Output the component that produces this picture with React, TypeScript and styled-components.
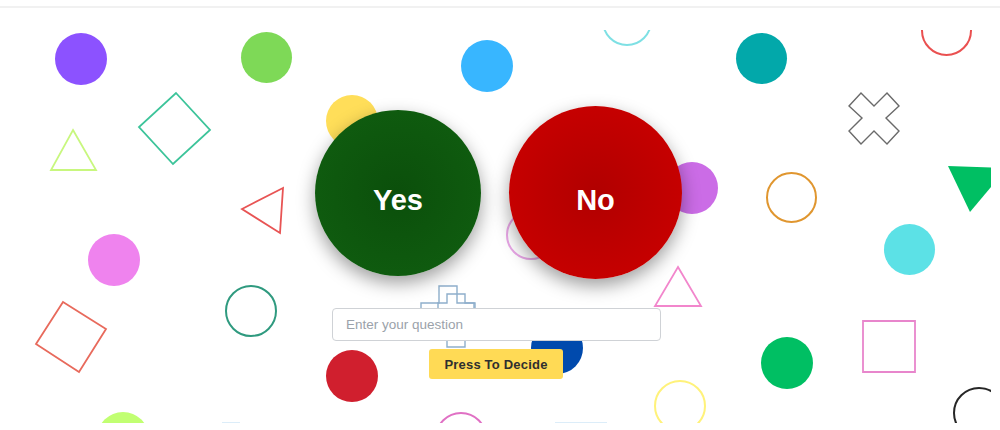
import styled, { createGlobalStyle } from "styled-components";

const GlobalStyle = createGlobalStyle`
    html, body {
        margin: 0;
        padding: 0;
        background: #ffffff;
        font-family: "Liberation Sans", Arial, sans-serif;
    }
`;

const Page = styled.div`
    width: 1000px;
    height: 430px;
    overflow: hidden;
    background: #ffffff;
`;

const TopBar = styled.div`
    height: 6px;
    border-bottom: 2px solid #f1f1f1;
`;

const Stage = styled.main`
    position: relative;
    margin: 22px 0 0 8px;
    width: 983px;
    height: 393px;
    overflow: hidden;
    display: flex;
    flex-direction: column;
    align-items: center;
    padding-top: 76px;
    box-sizing: border-box;
`;

const Backdrop = styled.svg`
    position: absolute;
    inset: 0;
    width: 983px;
    height: 393px;
    z-index: 0;
`;

const Choices = styled.div`
    position: relative;
    z-index: 1;
    display: flex;
    align-items: center;
    gap: 28px;
    margin-left: -2px;
`;

const Choice = styled.button<{ $size: number; $edge: string; $core: string }>`
    width: ${(p) => p.$size}px;
    height: ${(p) => p.$size}px;
    border: none;
    border-radius: 50%;
    background: radial-gradient(circle at 50% 50%, ${(p) => p.$core} 0%, ${(p) => p.$edge} 72%);
    box-shadow: 0 7px 18px rgba(0, 0, 0, 0.38);
    color: #ffffff;
    font-family: "Liberation Sans", Arial, sans-serif;
    font-weight: 700;
    font-size: 29px;
    padding: 16px 0 0;
    cursor: pointer;
`;

const Question = styled.input`
    position: relative;
    z-index: 1;
    width: 329px;
    height: 33px;
    box-sizing: border-box;
    margin: 29px 6px 0 0;
    padding: 0 13px;
    border: 1px solid #cfd2d6;
    border-radius: 4px;
    background: #ffffff;
    font-family: "Liberation Sans", Arial, sans-serif;
    font-size: 13.5px;
    color: #333;
    outline: none;

    &::placeholder {
        color: #9ba2aa;
    }
`;

const DecideButton = styled.button`
    position: relative;
    z-index: 1;
    width: 134px;
    height: 30px;
    margin: 8px 7px 0 0;
    border: none;
    border-radius: 3px;
    background: #ffda55;
    color: #2f2f2f;
    font-family: "Liberation Sans", Arial, sans-serif;
    font-weight: 700;
    font-size: 13px;
    letter-spacing: 0.2px;
    cursor: pointer;
`;

type Dot = { x: number; y: number; d: number; c: string };

// filled circles: left, top, diameter (page coords)
const dots: Dot[] = [
    { x: 55, y: 33, d: 52, c: "#8c52ff" },
    { x: 241, y: 32, d: 51, c: "#7ed957" },
    { x: 326, y: 95, d: 52, c: "#ffde59" },
    { x: 461, y: 40, d: 52, c: "#38b6ff" },
    { x: 736, y: 33, d: 51, c: "#02a8aa" },
    { x: 666, y: 162, d: 52, c: "#cb6ce6" },
    { x: 88, y: 234, d: 52, c: "#ef83ee" },
    { x: 884, y: 224, d: 51, c: "#5ce1e6" },
    { x: 761, y: 337, d: 52, c: "#00bf63" },
    { x: 326, y: 350, d: 52, c: "#d01f2e" },
    { x: 531, y: 322, d: 52, c: "#004aad" },
    { x: 97, y: 412, d: 52, c: "#c1ff72" },
];

// outlined circles
const rings: Dot[] = [
    { x: 602, y: -4, d: 50, c: "#7ee0e4" },
    { x: 921, y: 5, d: 51, c: "#ea5050" },
    { x: 766, y: 172, d: 51, c: "#e0962f" },
    { x: 225, y: 285, d: 52, c: "#2f9a7f" },
    { x: 506, y: 210, d: 50, c: "#e8a6e6" },
    { x: 654, y: 380, d: 52, c: "#fff27a" },
    { x: 953, y: 387, d: 52, c: "#262626" },
    { x: 435, y: 412, d: 52, c: "#e070c4" },
];

type Outline = { pts: string; c: string; fill?: boolean; w?: number };

const outlines: Outline[] = [
    { pts: "73,130 96,170 51,170", c: "#c8f77e" },
    { pts: "176,93 210,130 173,164 139,127", c: "#3cc49a" },
    { pts: "283,188 242,209 280,233", c: "#e85454" },
    { pts: "678,267 701,306 655,306", c: "#f286cc" },
    { pts: "948,166 1007,168 970,212", c: "#00bf63", fill: true },
    { pts: "63,302 106,329 79,372 36,344", c: "#e86a5c" },
    { pts: "863,321 915,321 915,372 863,372", c: "#e886cc" },
    // gray X
    {
        pts: "849,106 861,93 874,106 887,93 899,106 886,118 899,131 887,144 874,131 861,144 849,131 862,118",
        c: "#6a6a6a",
        w: 1.4,
    },
    // blue plus shapes
    { pts: "439,286 457,286 457,303 475,303 475,321 457,321 457,339 439,339 439,321 421,321 421,303 439,303", c: "#8eaecb", w: 1.4 },
    { pts: "447,294 465,294 465,303 474,303 474,330 465,330 465,347 447,347 447,330 438,330 438,303 447,303", c: "#8eaecb", w: 1.4 },
    // light blue shapes sticking up from the bottom
    { pts: "222,422 240,422 240,460 222,460", c: "#dcedf9", fill: true },
    { pts: "555,422 607,422 607,470 555,470", c: "#dcedf9", fill: true },
];

const Shapes = () => (
    <Backdrop viewBox="8 30 983 393">
        {dots.map((s, i) => (
            <circle key={`d${i}`} cx={s.x + s.d / 2} cy={s.y + s.d / 2} r={s.d / 2} fill={s.c} />
        ))}
        {rings.map((s, i) => (
            <circle key={`r${i}`} cx={s.x + s.d / 2} cy={s.y + s.d / 2} r={s.d / 2 - 1} fill="none" stroke={s.c} strokeWidth={2} />
        ))}
        {outlines.map((s, i) => (
            <polygon
                key={`o${i}`}
                points={s.pts}
                fill={s.fill ? s.c : "none"}
                stroke={s.fill ? "none" : s.c}
                strokeWidth={s.w ?? 1.8}
                strokeLinejoin="miter"
            />
        ))}
    </Backdrop>
);

const App = () => {
    return (
        <Page>
            <GlobalStyle />
            <TopBar />
            <Stage>
                <Shapes />
                <Choices>
                    <Choice $size={166} $edge="#0f5b0f" $core="#0b4f0b">Yes</Choice>
                    <Choice $size={173} $edge="#c60000" $core="#b10000">No</Choice>
                </Choices>
                <Question placeholder="Enter your question" />
                <DecideButton>Press To Decide</DecideButton>
            </Stage>
        </Page>
    );
};

export default App;
